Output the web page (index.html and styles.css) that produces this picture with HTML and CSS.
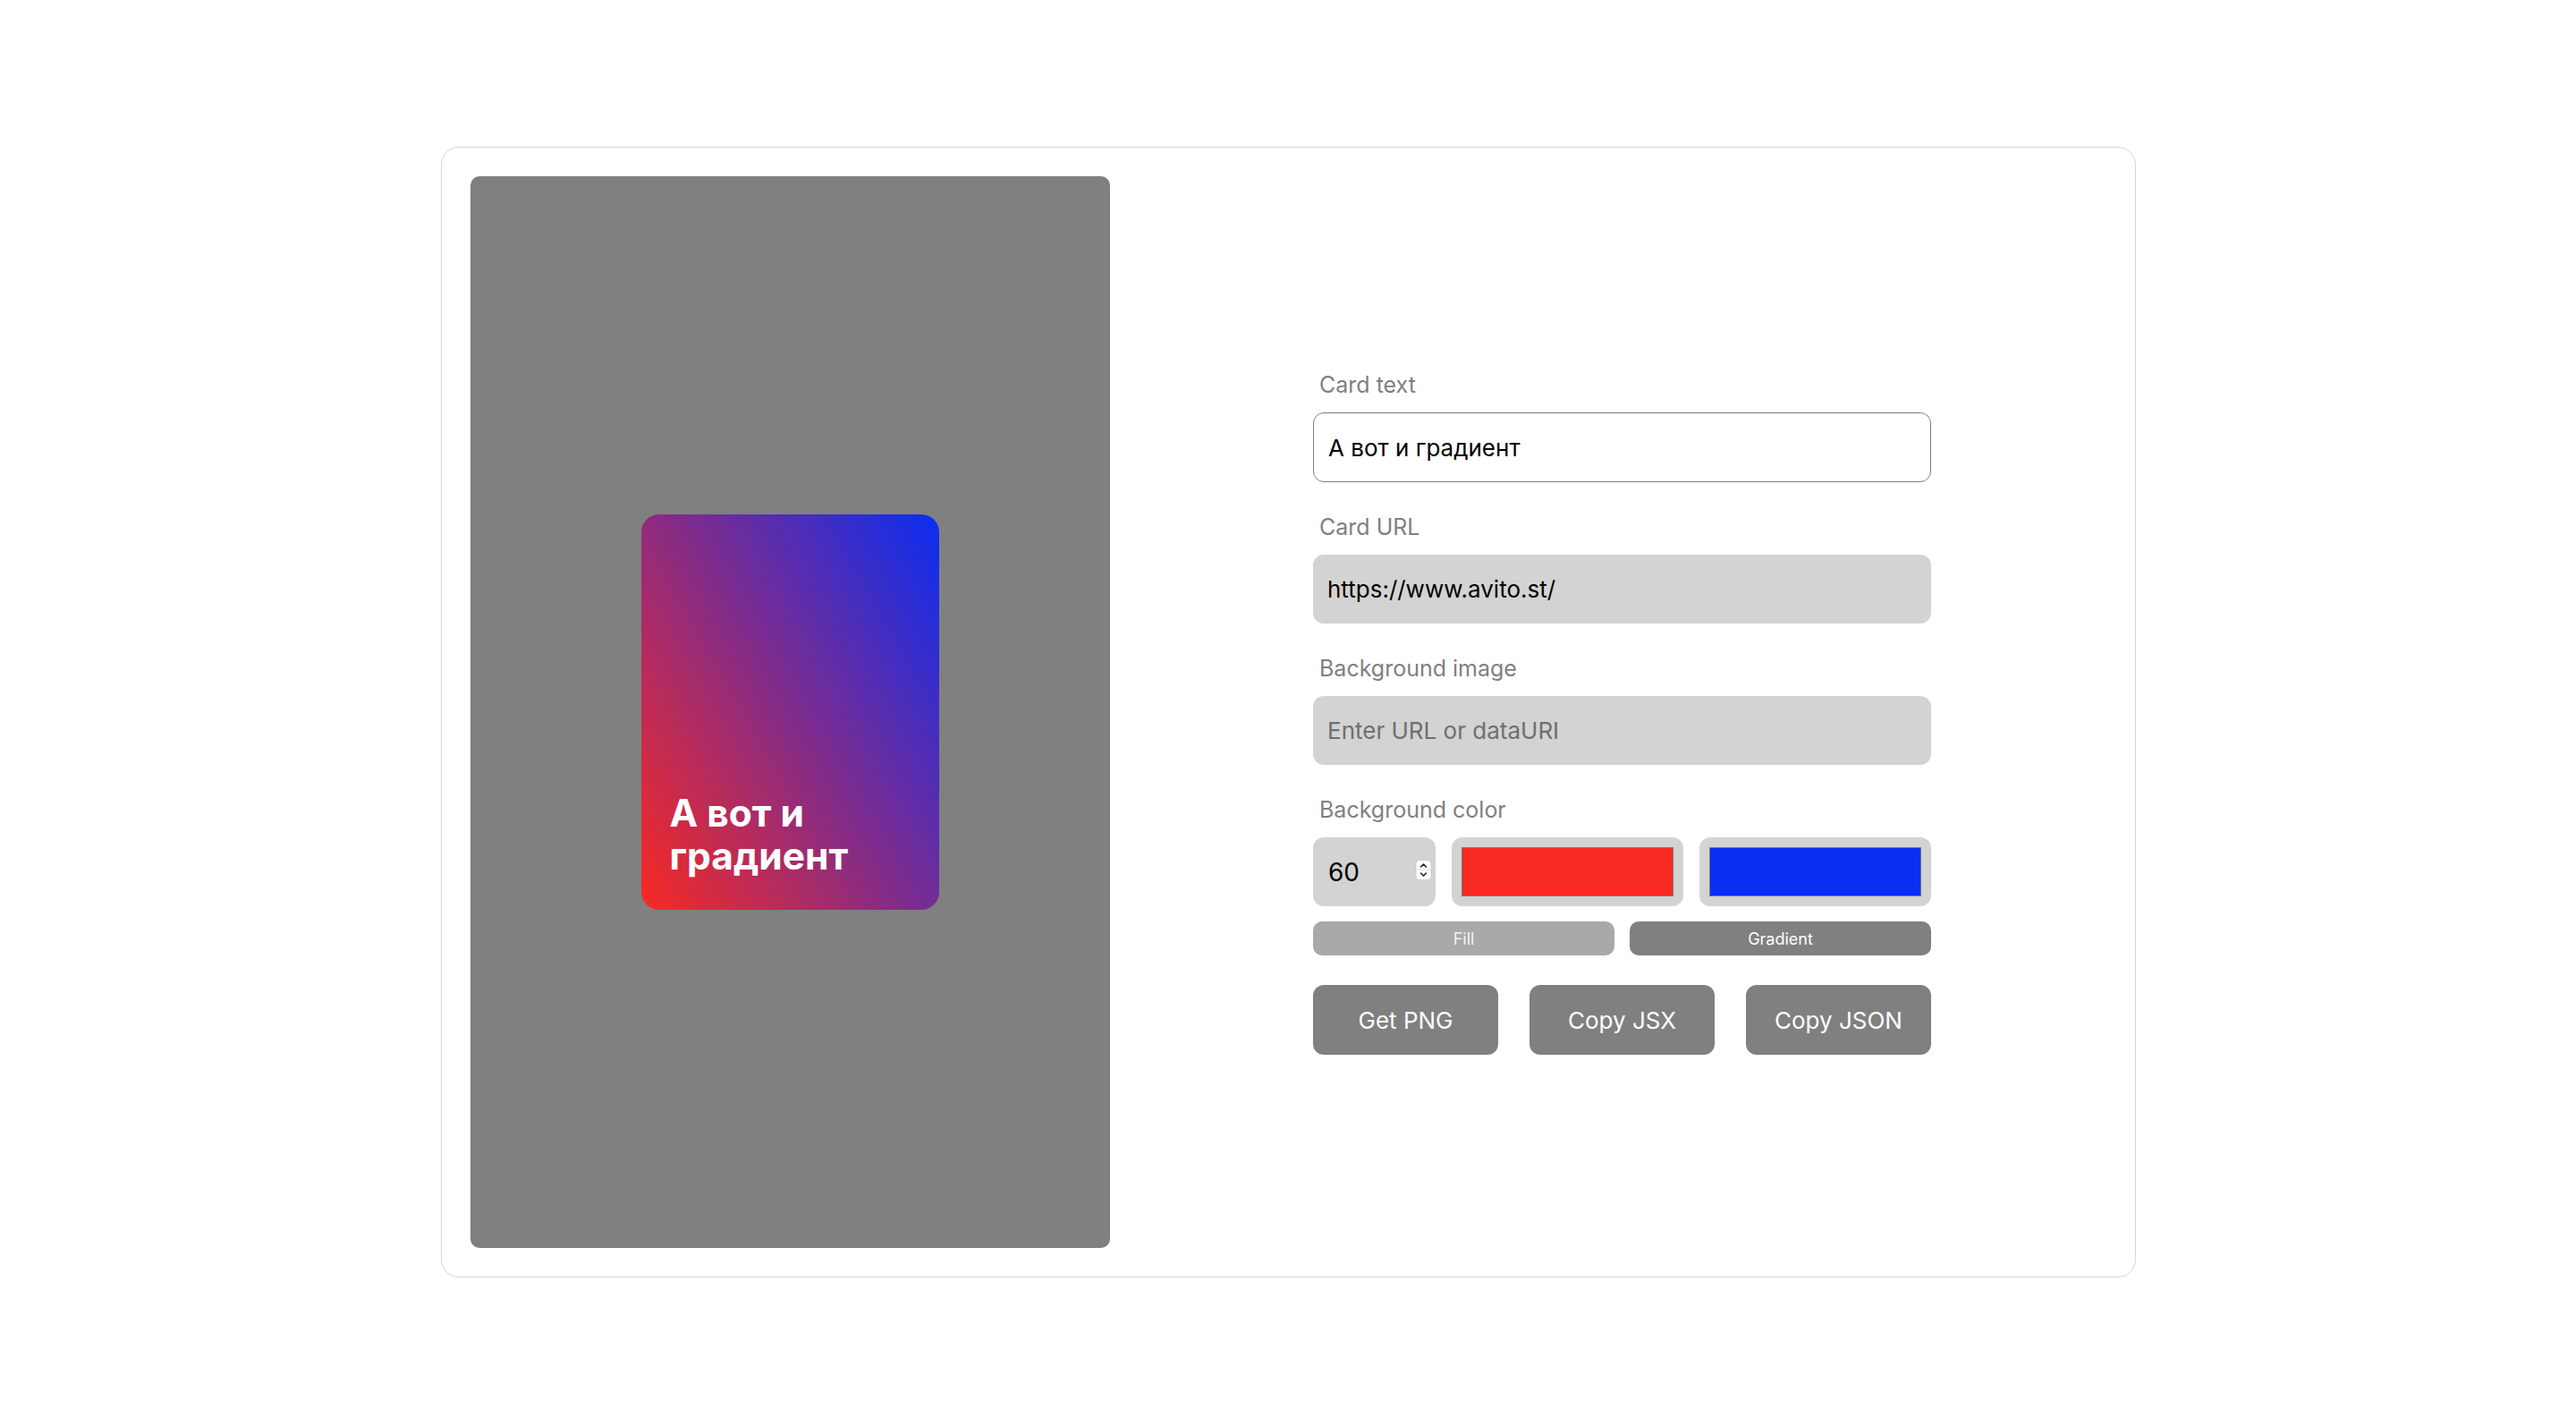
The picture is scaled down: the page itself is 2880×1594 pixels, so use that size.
FILE: index.html
```html
<!DOCTYPE html>
<html lang="ru">
<head>
<meta charset="utf-8">
<title>Card generator</title>
<link rel="stylesheet" href="styles.css">
</head>
<body>
<main class="page">
  <section class="frame">
    <div class="preview">
      <div class="card">
        <p class="card-text">А вот и градиент</p>
      </div>
    </div>
    <div class="side">
      <form class="form">
        <div class="field">
          <label class="label">Card text</label>
          <input class="input input-light" type="text" value="А вот и градиент">
        </div>
        <div class="field">
          <label class="label">Card URL</label>
          <input class="input input-gray" type="text" value="https://www.avito.st/">
        </div>
        <div class="field">
          <label class="label">Background image</label>
          <input class="input input-gray" type="text" placeholder="Enter URL or dataURI">
        </div>
        <div class="field">
          <label class="label">Background color</label>
          <div class="color-row">
            <div class="number">
              <span class="number-value">60</span>
              <svg class="spinner" width="19" height="23" viewBox="0 0 19 23">
                <rect x="1" y="0.5" width="17" height="22" rx="4" fill="#ffffff" stroke="#c4c4c4" stroke-width="0.8"/>
                <line x1="1.5" y1="11.5" x2="17.5" y2="11.5" stroke="#e2e2e2" stroke-width="1"/>
                <path d="M6.5 8 L9.5 5 L12.5 8" fill="none" stroke="#222" stroke-width="1.6" stroke-linecap="round" stroke-linejoin="round"/>
                <path d="M6.5 15 L9.5 18 L12.5 15" fill="none" stroke="#222" stroke-width="1.6" stroke-linecap="round" stroke-linejoin="round"/>
              </svg>
            </div>
            <div class="swatch-box"><div class="swatch swatch-red"></div></div>
            <div class="swatch-box"><div class="swatch swatch-blue"></div></div>
          </div>
        </div>
        <div class="mode-row">
          <button type="button" class="mode mode-fill">Fill</button>
          <button type="button" class="mode mode-gradient">Gradient</button>
        </div>
        <div class="actions">
          <button type="button" class="action">Get PNG</button>
          <button type="button" class="action">Copy JSX</button>
          <button type="button" class="action">Copy JSON</button>
        </div>
      </form>
    </div>
  </section>
</main>
</body>
</html>
```

FILE: styles.css
```css
* {
  box-sizing: border-box;
}

html, body {
  margin: 0;
  padding: 0;
  background: #ffffff;
}

body {
  font-family: Inter, "Noto Sans", "Liberation Sans", sans-serif;
  color: #000;
}

.page {
  width: 100%;
  height: 1594px;
  display: flex;
  align-items: center;
  justify-content: center;
}

.frame {
  width: 1895px;
  height: 1264px;
  border: 1px solid #d6d6d6;
  border-radius: 20px;
  padding: 32px;
  display: flex;
  gap: 32px;
  margin-top: -3px;
}

.preview {
  width: 715px;
  flex: none;
  background: #808080;
  border-radius: 10px;
  display: flex;
  align-items: center;
  justify-content: center;
}

.card {
  width: 333px;
  height: 442px;
  border-radius: 20px;
  background: linear-gradient(60deg, #f82a22, #0a2ef2);
  display: flex;
  align-items: flex-end;
  padding: 32px 32px 36px 32px;
}

.card-text {
  margin: 0;
  color: #ffffff;
  font-weight: 700;
  font-size: 42.5px;
  line-height: 48px;
}

.side {
  flex: 1;
  display: flex;
  align-items: center;
  justify-content: center;
}

.form {
  width: 691px;
  display: flex;
  flex-direction: column;
  padding-top: 6px;
}

.field {
  display: flex;
  flex-direction: column;
  margin-bottom: 38px;
}

.field:nth-child(4) {
  margin-bottom: 17px;
}

.label {
  font-size: 25px;
  line-height: 24px;
  color: #808080;
  padding-left: 7px;
  margin-bottom: 19px;
}

.input {
  height: 78px;
  width: 100%;
  border-radius: 12px;
  font-family: Inter, "Noto Sans", "Liberation Sans", sans-serif;
  font-size: 26px;
  padding: 0 16px;
  color: #000;
  outline: none;
}

.input-light {
  background: #ffffff;
  border: 1.5px solid #808080;
}

.input-gray {
  background: #d3d3d3;
  border: none;
  height: 77px;
}

.input::placeholder {
  color: #6f6f6f;
}

.color-row {
  display: grid;
  grid-template-columns: 137px 1fr 1fr;
  gap: 18px;
  height: 77px;
}

.number {
  background: #d3d3d3;
  border-radius: 12px;
  display: flex;
  align-items: center;
  justify-content: space-between;
  padding: 0 4px 0 17px;
}

.number-value {
  font-size: 28px;
  color: #000;
}

.spinner {
  display: block;
  margin-top: -4px;
}

.swatch-box {
  background: #d3d3d3;
  border-radius: 12px;
  padding: 11px;
  display: flex;
}

.swatch {
  flex: 1;
  border: 1px solid #7a7a7a;
}

.swatch-red {
  background: #f82a22;
}

.swatch-blue {
  background: #0a2ef2;
}

.mode-row {
  display: grid;
  grid-template-columns: 1fr 1fr;
  gap: 17px;
  margin-bottom: 33px;
}

.mode {
  height: 38px;
  border: none;
  border-radius: 10px;
  font-family: Inter, "Noto Sans", "Liberation Sans", sans-serif;
  font-size: 18px;
  padding: 0;
}

.mode-fill {
  background: #a9a9a9;
  color: #f2f2f2;
}

.mode-gradient {
  background: #808080;
  color: #ffffff;
}

.actions {
  display: flex;
  justify-content: space-between;
}

.action {
  width: 207px;
  height: 78px;
  border: none;
  border-radius: 12px;
  background: #808080;
  color: #ffffff;
  font-family: Inter, "Noto Sans", "Liberation Sans", sans-serif;
  font-size: 26px;
  padding: 0;
}
```
